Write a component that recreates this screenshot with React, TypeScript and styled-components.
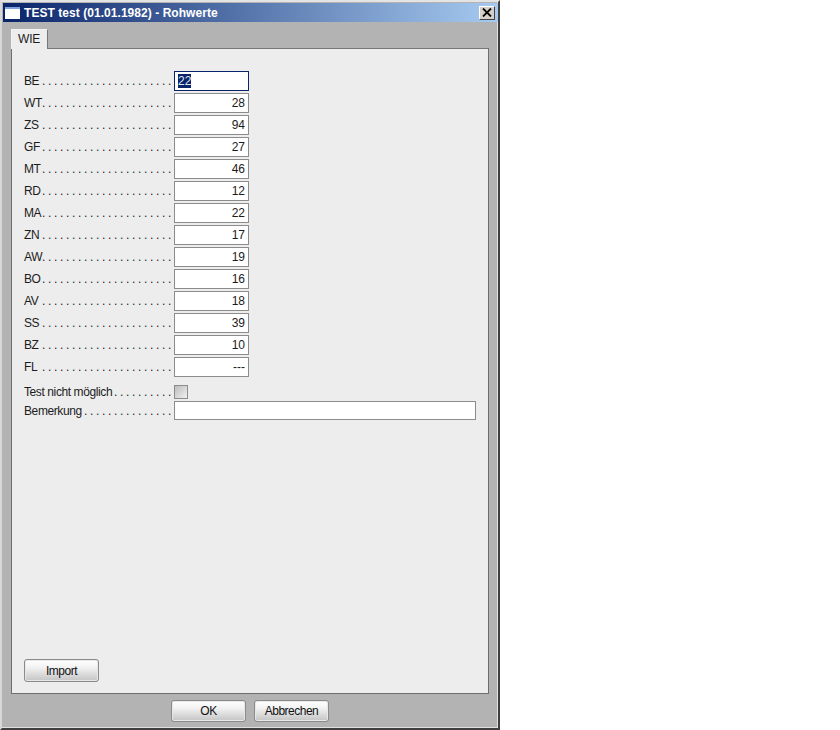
import React from "react";
import styled, { createGlobalStyle } from "styled-components";

const Global = createGlobalStyle`
  html, body { margin: 0; padding: 0; background: #fff; }
  body { font-family: "Liberation Sans", Arial, sans-serif; font-size: 12px; color: #1c1c1c; }
`;

const Page = styled.div`
  width: 840px;
  height: 730px;
  overflow: hidden;
`;

const Win = styled.div`
  box-sizing: border-box;
  width: 500px;
  height: 730px;
  display: flex;
  flex-direction: column;
  background: #b3b3b3;
  border-top: 2px solid #e4e4e4;
  border-left: 2px solid #d8d8d8;
  border-right: 2px solid #404040;
  border-bottom: 2px solid #404040;
  box-shadow: inset -1px -1px 0 #e0e0e0;
`;

const TitleBar = styled.div`
  height: 19px;
  margin: 1px 0 0 1px;
  padding: 0 3px 0 2px;
  display: flex;
  align-items: center;
  background: linear-gradient(90deg, #0a246a, #a6caf0);
  color: #fff;
  font-weight: 700;
  font-size: 12px;
`;

const AppIcon = styled.div`
  box-sizing: border-box;
  width: 15px;
  height: 12px;
  background: #fff;
  border-top: 2px solid #7fa4dc;
  margin-right: 4px;
`;

const Title = styled.span`
  flex: 1;
  letter-spacing: 0.05px;
`;

const Close = styled.div`
  box-sizing: border-box;
  width: 16px;
  height: 14px;
  background: #d4d0c8;
  border: 1px solid;
  border-color: #fff #404040 #404040 #fff;
  display: flex;
  align-items: center;
  justify-content: center;
`;

const Body = styled.div`
  flex: 1;
  display: flex;
  flex-direction: column;
  padding: 7px 9px 0 9px;
  min-height: 0;
`;

const Tab = styled.div`
  box-sizing: border-box;
  width: 37px;
  height: 20px;
  margin-bottom: -1px;
  z-index: 1;
  position: relative;
  border: 1px solid #777;
  border-bottom: none;
  border-left-color: #f4f4f4;
  border-top-color: #f4f4f4;
  background: #ededed;
  padding: 2px 0 0 6px;
  letter-spacing: -0.2px;
`;

const Panel = styled.div`
  box-sizing: border-box;
  height: 646px;
  border: 1px solid #6e6e6e;
  border-top-color: #777;
  background: #ededed;
  padding: 22px 12px 11px 12px;
  display: flex;
  flex-direction: column;
`;

const Row = styled.div`
  height: 20px;
  margin-bottom: 2px;
  display: flex;
  align-items: center;
`;

const Label = styled.div`
  width: 150px;
  display: flex;
  white-space: nowrap;
  letter-spacing: -0.4px;
`;

const Leader = styled.span`
  flex: 1;
  min-width: 0;
  display: flex;
  justify-content: flex-end;
  letter-spacing: 2.67px;
`;

const Field = styled.div<{ $focus?: boolean; $wide?: boolean }>`
  box-sizing: border-box;
  width: ${(p) => (p.$wide ? "302px" : "75px")};
  height: ${(p) => (p.$wide ? "19px" : "20px")};
  background: #fff;
  border: ${(p) => (p.$focus ? "1px solid #0a246a" : "1px solid #8c8c8c")};
  padding: 0 3px;
  line-height: 18px;
  text-align: ${(p) => (p.$focus ? "left" : "right")};
`;

const Selected = styled.span`
  background: #0a246a;
  color: #dfe6f5;
`;

const CheckRow = styled(Row)`
  margin-top: 6px;
  height: 14px;
  margin-bottom: 2px;
`;

const WideRow = styled(Row)`
  height: 19px;
`;

const Check = styled.div`
  box-sizing: border-box;
  width: 14px;
  height: 14px;
  border: 1px solid #8c8c8c;
  background: linear-gradient(135deg, #bdbdbd, #f0f0f0);
`;

const Spacer = styled.div`
  flex: 1;
`;

const Button = styled.button<{ $short?: boolean }>`
  box-sizing: border-box;
  width: 75px;
  height: ${(p) => (p.$short ? "22px" : "23px")};
  padding: 0;
  border: 1px solid #8a8a8a;
  border-radius: 3px;
  background: linear-gradient(180deg, #ffffff 0%, #f2f2f2 35%, #c4c4c4 100%);
  box-shadow: 0 0 0 1px #e8e8e8 inset;
  font: 12px "Liberation Sans", Arial, sans-serif;
  letter-spacing: -0.5px;
  color: #111;
`;

const Footer = styled.div`
  height: 23px;
  margin-top: 6px;
  display: flex;
  gap: 8px;
  justify-content: center;
`;

const rows: [string, string][] = [
  ["BE", "22"], ["WT", "28"], ["ZS", "94"], ["GF", "27"], ["MT", "46"],
  ["RD", "12"], ["MA", "22"], ["ZN", "17"], ["AW", "19"], ["BO", "16"],
  ["AV", "18"], ["SS", "39"], ["BZ", "10"], ["FL", "---"],
];

export default function App() {
  return (
    <Page>
      <Global />
      <Win>
        <TitleBar>
          <AppIcon />
          <Title>TEST test (01.01.1982) - Rohwerte</Title>
          <Close>
            <svg width="10" height="9" viewBox="0 0 10 9">
              <path d="M1 0.5 L9 8.5 M9 0.5 L1 8.5" stroke="#000" strokeWidth="1.8" />
            </svg>
          </Close>
        </TitleBar>
        <Body>
          <Tab>WIE</Tab>
          <Panel>
            {rows.map(([name, value], i) => (
              <Row key={name}>
                <Label>
                  {name}
                  <Leader>{".".repeat(22)}</Leader>
                </Label>
                {i === 0 ? (
                  <Field $focus>
                    <Selected>{value}</Selected>
                  </Field>
                ) : (
                  <Field>{value}</Field>
                )}
              </Row>
            ))}
            <CheckRow>
              <Label>
                Test nicht möglich
                <Leader>{".".repeat(10)}</Leader>
              </Label>
              <Check />
            </CheckRow>
            <WideRow>
              <Label>
                Bemerkung
                <Leader>{".".repeat(15)}</Leader>
              </Label>
              <Field $wide />
            </WideRow>
            <Spacer />
            <Button>Import</Button>
          </Panel>
          <Footer>
            <Button $short>OK</Button>
            <Button $short>Abbrechen</Button>
          </Footer>
        </Body>
      </Win>
    </Page>
  );
}
